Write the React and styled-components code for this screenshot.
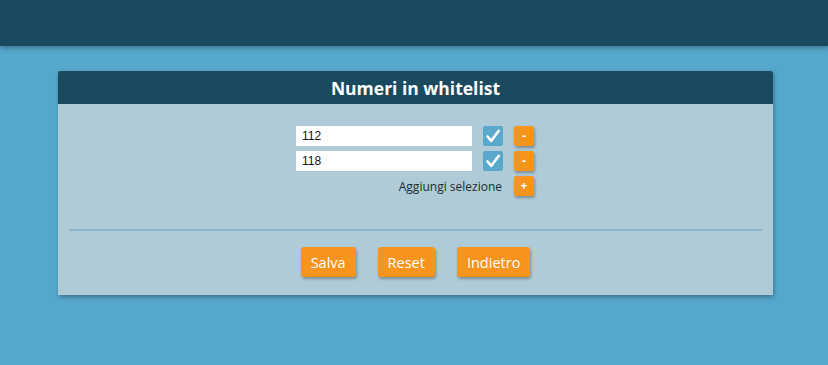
import React from "react";
import styled, { createGlobalStyle } from "styled-components";

const Global = createGlobalStyle`
  html, body { margin: 0; padding: 0; }
  body {
    background: #56a7cc;
    font-family: "Open Sans", "Liberation Sans", sans-serif;
    height: 365px;
    overflow: hidden;
  }
`;

const TopBar = styled.header`
  height: 46px;
  background: #194a5f;
  box-shadow: 0 2px 5px rgba(0, 0, 0, 0.3);
`;

const Panel = styled.section`
  width: 715px;
  margin: 25px 0 0 58px;
  background: #afcbd7;
  border-radius: 2px 2px 0 0;
  box-shadow: 1px 2px 4px rgba(0, 0, 0, 0.3);
`;

const PanelTitle = styled.h1`
  margin: 0;
  height: 33px;
  display: flex;
  align-items: center;
  justify-content: center;
  background: #194a5f;
  color: #fff;
  font-size: 17.5px;
  font-weight: 700;
  border-radius: 2px 2px 0 0;
`;

const Body = styled.div`
  padding: 22px 11px 18px;
`;

const Grid = styled.div`
  display: grid;
  grid-template-columns: 176px 20px 20px;
  grid-auto-rows: 20px;
  column-gap: 11px;
  row-gap: 5px;
  justify-content: center;
  align-items: center;
  padding-right: 1px;
`;

const NumberInput = styled.input`
  box-sizing: border-box;
  width: 176px;
  height: 20px;
  border: none;
  outline: none;
  background: #fff;
  padding: 0 6px;
  font-family: "Liberation Sans", Arial, sans-serif;
  font-size: 12px;
  color: #111;
`;

const Check = styled.span`
  width: 20px;
  height: 20px;
  border-radius: 2px;
  background: #5aa8cc;
  display: flex;
  align-items: center;
  justify-content: center;
`;

const SmallButton = styled.button`
  width: 20px;
  height: 20px;
  padding: 0;
  border: none;
  border-radius: 2px;
  background: #f7941d;
  color: #fff;
  font-family: "Open Sans", sans-serif;
  font-weight: 700;
  font-size: 12px;
  line-height: 20px;
  box-shadow: 1px 2px 3px rgba(0, 0, 0, 0.3);
  cursor: pointer;
`;

const AddLabel = styled.span`
  grid-column: 1 / span 2;
  justify-self: end;
  font-size: 12px;
  color: #1d2a33;
  margin-right: 1px;
`;

const Divider = styled.hr`
  margin: 33px 0 16px;
  border: none;
  height: 2px;
  background: #8ab3c6;
`;

const Actions = styled.div`
  display: flex;
  justify-content: center;
  gap: 22px;
`;

const ActionButton = styled.button`
  height: 30px;
  padding: 0 10px;
  border: none;
  border-radius: 3px;
  background: #f7941d;
  color: #fff;
  font-family: "Open Sans", sans-serif;
  font-size: 14.5px;
  font-weight: 500;
  box-shadow: 1px 2px 3px rgba(0, 0, 0, 0.3);
  cursor: pointer;
`;

const CheckMark = () => (
  <svg width="16" height="16" viewBox="0 0 16 16">
    <path
      d="M2.5 8.5 L6.3 12.8 L13.8 2.8"
      fill="none"
      stroke="#fff"
      strokeWidth="2.6"
      strokeLinecap="round"
      strokeLinejoin="round"
    />
  </svg>
);

const numbers = ["112", "118"];

export default function App() {
  return (
    <>
      <Global />
      <TopBar />
      <Panel>
        <PanelTitle>Numeri in whitelist</PanelTitle>
        <Body>
          <Grid>
            {numbers.map((n) => (
              <React.Fragment key={n}>
                <NumberInput defaultValue={n} />
                <Check>
                  <CheckMark />
                </Check>
                <SmallButton>-</SmallButton>
              </React.Fragment>
            ))}
            <AddLabel>Aggiungi selezione</AddLabel>
            <SmallButton>+</SmallButton>
          </Grid>
          <Divider />
          <Actions>
            <ActionButton>Salva</ActionButton>
            <ActionButton>Reset</ActionButton>
            <ActionButton>Indietro</ActionButton>
          </Actions>
        </Body>
      </Panel>
    </>
  );
}
